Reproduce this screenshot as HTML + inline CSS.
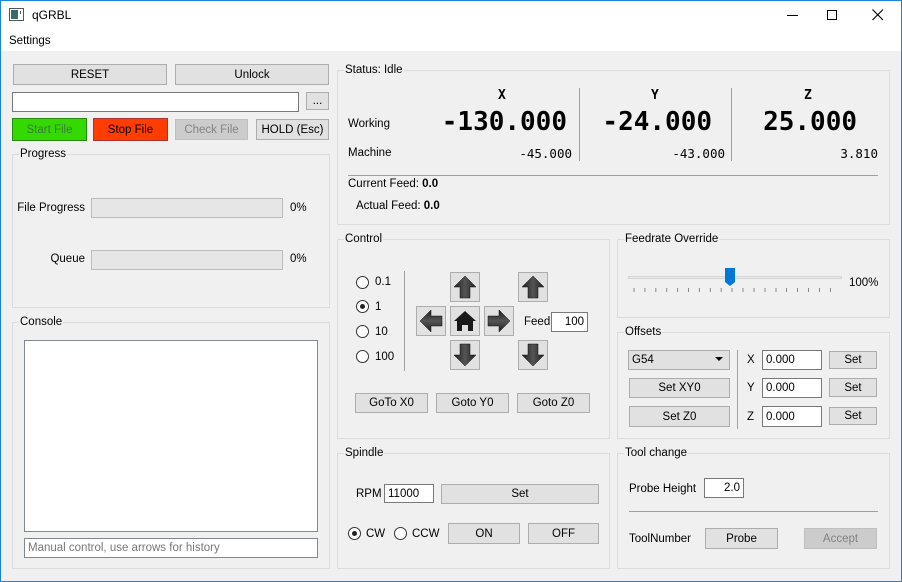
<!DOCTYPE html>
<html><head><meta charset="utf-8"><style>
*{box-sizing:border-box;margin:0;padding:0}
body{width:902px;height:582px;overflow:hidden;background:#f0f0f0;font-family:"Liberation Sans",sans-serif;font-size:11.5px;color:#000;position:relative}
.a{position:absolute}
.win{position:absolute;left:0;top:0;width:902px;height:582px;border:1px solid #1b84d8;border-top:none;pointer-events:none}
.wtop{position:absolute;left:0;top:0;width:902px;height:1px;background:#1b84d8}
.btn{position:absolute;background:#e1e1e1;border:1px solid #adadad;text-align:center;font-size:11.5px;display:flex;align-items:center;justify-content:center}
.inp{position:absolute;background:#fff;border:1px solid #7a7a7a;font-size:11.5px;display:flex;align-items:center;padding:0 3px}
.grp{position:absolute;border:1px solid #dcdcdc}
.gt{position:absolute;top:-8px;left:6px;background:#f0f0f0;padding:0 1px;font-size:11.5px;line-height:14px}
.bar{position:absolute;background:#e6e6e6;border:1px solid #bcbcbc}
.rad{position:absolute;width:13px;height:13px;border:1px solid #333;border-radius:50%;background:#fff}
.rad.on::after{content:"";position:absolute;left:3px;top:3px;width:5px;height:5px;border-radius:50%;background:#222}
.mono{font-family:"DejaVu Sans Mono","Liberation Mono",monospace}
.ab{position:absolute;width:30px;height:30px;background:#e1e1e1;border:1px solid #adadad}
</style></head><body>
<div class="wtop"></div>
<div class="a" style="left:1px;top:1px;width:900px;height:50px;background:#fff"></div>
<svg class="a" style="left:9px;top:8px" width="16" height="14"><rect x="0.5" y="0.5" width="14" height="12" fill="#fff" stroke="#555"/><rect x="2" y="2" width="7" height="9" fill="#3a6a6a"/><rect x="11" y="3" width="1" height="3" fill="#555"/></svg>
<div class="a" style="left:32px;top:8px;font-size:12px">qGRBL</div>
<div class="a" style="left:787px;top:15px;width:11px;height:1px;background:#000"></div>
<div class="a" style="left:827px;top:10px;width:10px;height:10px;border:1px solid #000"></div>
<svg class="a" style="left:872px;top:9px" width="12" height="12"><path d="M0.5 0.5L11 11M11 0.5L0.5 11" stroke="#000" stroke-width="1.1"/></svg>
<div class="a" style="left:9px;top:35px">Settings</div>

<div class="btn" style="left:13px;top:64px;width:154px;height:21px">RESET</div>
<div class="btn" style="left:175px;top:64px;width:154px;height:21px">Unlock</div>
<div class="inp" style="left:12px;top:92px;width:287px;height:20px"></div>
<div class="btn" style="left:306px;top:92px;width:23px;height:18px">...</div>
<div class="btn" style="left:12px;top:118px;width:75px;height:23px;background:#33d900;border-color:#2a8a10;color:#3f7a3f">Start File</div>
<div class="btn" style="left:93px;top:118px;width:75px;height:23px;background:#ff3d00;border-color:#a33">Stop File</div>
<div class="btn" style="left:175px;top:119px;width:73px;height:21px;background:#cccccc;border-color:#bfbfbf;color:#838383">Check File</div>
<div class="btn" style="left:256px;top:119px;width:73px;height:21px">HOLD (Esc)</div>

<div class="grp" style="left:12px;top:154px;width:318px;height:154px"><div class="gt">Progress</div></div>
<div class="a" style="left:15px;top:202px;width:70px;text-align:right">File Progress</div>
<div class="bar" style="left:91px;top:198px;width:192px;height:20px"></div>
<div class="a" style="left:290px;top:202px">0%</div>
<div class="a" style="left:15px;top:253px;width:70px;text-align:right">Queue</div>
<div class="bar" style="left:91px;top:250px;width:192px;height:20px"></div>
<div class="a" style="left:290px;top:253px">0%</div>

<div class="grp" style="left:12px;top:322px;width:318px;height:247px"><div class="gt">Console</div></div>
<div class="a" style="left:24px;top:340px;width:294px;height:192px;background:#fff;border:1px solid #828790"></div>
<div class="a" style="left:24px;top:538px;width:294px;height:20px;background:#fff;border:1px solid #828790;color:#777;padding:3px 3px">Manual control, use arrows for history</div>

<div class="grp" style="left:337px;top:70px;width:553px;height:155px"><div class="gt">Status: Idle</div></div>
<div class="a mono" style="left:498px;top:88px;font-weight:bold;font-size:13px">X</div>
<div class="a mono" style="left:651px;top:88px;font-weight:bold;font-size:13px">Y</div>
<div class="a mono" style="left:804px;top:88px;font-weight:bold;font-size:13px">Z</div>
<div class="a" style="left:579px;top:88px;width:1px;height:73px;background:#a0a0a0"></div>
<div class="a" style="left:731px;top:88px;width:1px;height:73px;background:#a0a0a0"></div>
<div class="a" style="left:348px;top:118px">Working</div>
<div class="a mono" style="left:380px;top:106px;width:187px;text-align:right;font-weight:bold;font-size:26px;line-height:32px">-130.000</div>
<div class="a mono" style="left:560px;top:106px;width:152px;text-align:right;font-weight:bold;font-size:26px;line-height:32px">-24.000</div>
<div class="a mono" style="left:700px;top:106px;width:157px;text-align:right;font-weight:bold;font-size:26px;line-height:32px">25.000</div>
<div class="a" style="left:348px;top:147px">Machine</div>
<div class="a mono" style="left:470px;top:146px;width:102px;text-align:right;font-size:12.5px">-45.000</div>
<div class="a mono" style="left:620px;top:146px;width:105px;text-align:right;font-size:12.5px">-43.000</div>
<div class="a mono" style="left:770px;top:146px;width:108px;text-align:right;font-size:12.5px">3.810</div>
<div class="a" style="left:348px;top:175px;width:530px;height:1px;background:#a0a0a0"></div>
<div class="a" style="left:348px;top:178px">Current Feed: <b>0.0</b></div>
<div class="a" style="left:356px;top:200px">Actual Feed: <b>0.0</b></div>

<div class="grp" style="left:337px;top:239px;width:273px;height:200px"><div class="gt">Control</div></div>
<div class="rad" style="left:356px;top:276px"></div><div class="a" style="left:375px;top:276px">0.1</div>
<div class="rad on" style="left:356px;top:300px"></div><div class="a" style="left:375px;top:301px">1</div>
<div class="rad" style="left:356px;top:325px"></div><div class="a" style="left:375px;top:326px">10</div>
<div class="rad" style="left:356px;top:350px"></div><div class="a" style="left:375px;top:351px">100</div>
<div class="a" style="left:404px;top:271px;width:1px;height:100px;background:#a0a0a0"></div>
<svg width="0" height="0" style="position:absolute"><defs><linearGradient id="g" x1="0" y1="0" x2="1" y2="0"><stop offset="0" stop-color="#1e1e1e"/><stop offset="0.5" stop-color="#555"/><stop offset="1" stop-color="#1e1e1e"/></linearGradient></defs></svg>
<div class="ab" style="left:450px;top:272px"><svg width="28" height="28"><polygon points="14,3 25,14 19,14 19,25 9,25 9,14 3,14" fill="url(#g)" stroke="#111" stroke-width="0.5"/></svg></div>
<div class="ab" style="left:518px;top:272px"><svg width="28" height="28"><polygon points="14,3 25,14 19,14 19,25 9,25 9,14 3,14" fill="url(#g)" stroke="#111" stroke-width="0.5"/></svg></div>
<div class="ab" style="left:450px;top:340px"><svg width="28" height="28"><g transform="rotate(180 14 14)"><polygon points="14,3 25,14 19,14 19,25 9,25 9,14 3,14" fill="url(#g)" stroke="#111" stroke-width="0.5"/></g></svg></div>
<div class="ab" style="left:518px;top:340px"><svg width="28" height="28"><g transform="rotate(180 14 14)"><polygon points="14,3 25,14 19,14 19,25 9,25 9,14 3,14" fill="url(#g)" stroke="#111" stroke-width="0.5"/></g></svg></div>
<div class="ab" style="left:416px;top:306px"><svg width="28" height="28"><g transform="rotate(-90 14 14)"><polygon points="14,3 25,14 19,14 19,25 9,25 9,14 3,14" fill="url(#g)" stroke="#111" stroke-width="0.5"/></g></svg></div>
<div class="ab" style="left:484px;top:306px"><svg width="28" height="28"><g transform="rotate(90 14 14)"><polygon points="14,3 25,14 19,14 19,25 9,25 9,14 3,14" fill="url(#g)" stroke="#111" stroke-width="0.5"/></g></svg></div>
<div class="ab" style="left:450px;top:306px"><svg width="28" height="28"><polygon points="14,4 25,14 22,14 22,24 17,24 17,18 11,18 11,24 6,24 6,14 3,14" fill="#1a1a1a"/></svg></div>
<div class="a" style="left:524px;top:316px">Feed</div>
<div class="inp" style="left:551px;top:312px;width:37px;height:20px;justify-content:flex-end">100</div>
<div class="btn" style="left:355px;top:393px;width:73px;height:20px">GoTo X0</div>
<div class="btn" style="left:436px;top:393px;width:73px;height:20px">Goto Y0</div>
<div class="btn" style="left:517px;top:393px;width:73px;height:20px">Goto Z0</div>

<div class="grp" style="left:617px;top:239px;width:273px;height:79px"><div class="gt">Feedrate Override</div></div>
<div class="a" style="left:628px;top:276px;width:214px;height:3px;background:#e7eaea;border:1px solid #d6d6d6"></div>
<svg class="a" style="left:724px;top:268px" width="12" height="19"><path d="M1 0H11V14L6 18L1 14Z" fill="#0078d7"/></svg>
<svg class="a" style="left:628px;top:288px" width="214" height="6"><g stroke="#888">
<path d="M6 0V4M16.9 0V4M27.8 0V4M38.7 0V4M49.6 0V4M60.5 0V4M71.4 0V4M82.3 0V4M93.2 0V4M104 0V4M115 0V4M126 0V4M137 0V4M148 0V4M158.5 0V4M169.5 0V4M180.5 0V4M191.5 0V4M202.5 0V4"/></g></svg>
<div class="a" style="left:849px;top:277px">100%</div>

<div class="grp" style="left:617px;top:332px;width:273px;height:107px"><div class="gt">Offsets</div></div>
<div class="btn" style="left:628px;top:350px;width:102px;height:20px;justify-content:flex-start;padding-left:3px">G54</div>
<svg class="a" style="left:715px;top:357px" width="8" height="5"><path d="M0 0H8L4 4Z" fill="#000"/></svg>
<div class="btn" style="left:629px;top:378px;width:101px;height:20px">Set XY0</div>
<div class="btn" style="left:629px;top:406px;width:101px;height:21px">Set Z0</div>
<div class="a" style="left:737px;top:350px;width:1px;height:79px;background:#a0a0a0"></div>
<div class="a" style="left:747px;top:354px">X</div><div class="a" style="left:747px;top:382px">Y</div><div class="a" style="left:747px;top:411px">Z</div>
<div class="inp" style="left:762px;top:350px;width:60px;height:20px">0.000</div>
<div class="inp" style="left:762px;top:378px;width:60px;height:20px">0.000</div>
<div class="inp" style="left:762px;top:406px;width:60px;height:21px">0.000</div>
<div class="btn" style="left:829px;top:351px;width:48px;height:18px">Set</div>
<div class="btn" style="left:829px;top:378px;width:48px;height:19px">Set</div>
<div class="btn" style="left:829px;top:407px;width:48px;height:18px">Set</div>

<div class="grp" style="left:337px;top:453px;width:273px;height:116px"><div class="gt">Spindle</div></div>
<div class="a" style="left:356px;top:488px">RPM</div>
<div class="inp" style="left:384px;top:484px;width:50px;height:19px">11000</div>
<div class="btn" style="left:441px;top:484px;width:158px;height:20px">Set</div>
<div class="rad on" style="left:348px;top:527px"></div><div class="a" style="left:366px;top:528px">CW</div>
<div class="rad" style="left:394px;top:527px"></div><div class="a" style="left:412px;top:528px">CCW</div>
<div class="btn" style="left:448px;top:523px;width:72px;height:21px">ON</div>
<div class="btn" style="left:528px;top:523px;width:71px;height:21px">OFF</div>

<div class="grp" style="left:617px;top:453px;width:273px;height:116px"><div class="gt">Tool change</div></div>
<div class="a" style="left:629px;top:483px">Probe Height</div>
<div class="inp" style="left:704px;top:478px;width:40px;height:20px;justify-content:flex-end">2.0</div>
<div class="a" style="left:629px;top:511px;width:249px;height:1px;background:#a0a0a0"></div>
<div class="a" style="left:629px;top:533px">ToolNumber</div>
<div class="btn" style="left:705px;top:528px;width:73px;height:21px">Probe</div>
<div class="btn" style="left:804px;top:528px;width:73px;height:21px;background:#cccccc;border-color:#bfbfbf;color:#838383">Accept</div>
<div class="win"></div>
</body></html>
